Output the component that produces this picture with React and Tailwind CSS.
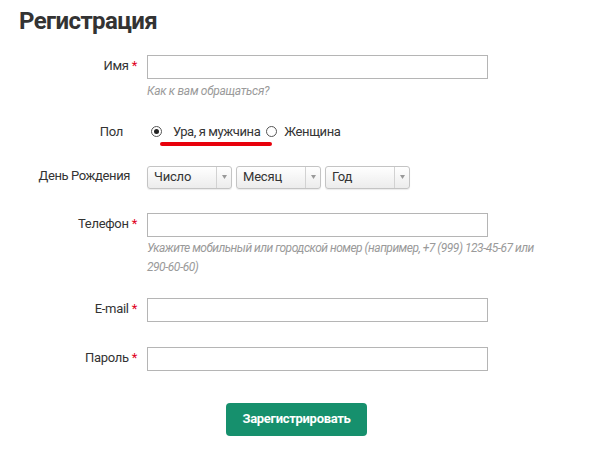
export default function App() {
  const font = { fontFamily: '"Roboto", "Noto Sans", sans-serif' };
  const Label = ({ children, req }) => (
    <div className="w-[137px] shrink-0 text-right text-[13px] text-[#333] tracking-[-0.3px]">
      {children}
      {req && <span className="text-[#e0001b] ml-[3px]">*</span>}
    </div>
  );
  const Input = () => (
    <div className="w-[341px] h-[24px] border border-[#b5b5b5] bg-white" />
  );
  const Select = ({ text }) => (
    <div className="w-[85px] h-[23px] border border-[#c4c4c4] rounded-[3px] flex bg-gradient-to-b from-white to-[#ececec] shadow-[0_1px_1px_rgba(0,0,0,0.08)]">
      <div className="flex-1 flex items-center pl-[6px] text-[13px] text-[#333] tracking-[-0.2px]">{text}</div>
      <div className="w-[15px] border-l border-[#d2d2d2] flex items-center justify-center">
        <svg width="5" height="4" viewBox="0 0 5 4"><path d="M0 0h5L2.5 4z" fill="#999" /></svg>
      </div>
    </div>
  );
  const Radio = ({ checked }) => (
    <span className="w-[11px] h-[11px] rounded-full border border-[#555] bg-white flex items-center justify-center shrink-0">
      {checked && <span className="w-[5px] h-[5px] rounded-full bg-[#222]" />}
    </span>
  );
  return (
    <div className="w-[600px] h-[449px] bg-white text-[#333] overflow-hidden" style={font}>
      <h1 className="pl-[19px] pt-[4px] text-[24px] font-bold text-[#333] leading-[34px] tracking-[-0.6px]">Регистрация</h1>
      <div className="mt-[17px] flex flex-col">
        <div className="flex gap-[10px]">
          <div className="pt-[1px] w-[137px] flex justify-end"><Label req>Имя</Label></div>
          <div className="flex flex-col">
            <Input />
            <div className="mt-[3px] text-[12px] italic text-[#9a9a9a] leading-[19px] tracking-[-0.3px]">Как к вам обращаться?</div>
          </div>
        </div>
        <div className="mt-[21px] flex gap-[10px] items-center">
          <div className="w-[137px] text-right text-[13px] pr-[14px] tracking-[-0.3px]">Пол</div>
          <div className="relative flex items-center text-[13px] tracking-[-0.4px]">
            <span className="ml-[4px]"><Radio checked /></span>
            <span className="ml-[11px]">Ура, я мужчина</span>
            <span className="ml-[6px]"><Radio /></span>
            <span className="ml-[7px]">Женщина</span>
            <span className="absolute left-[13px] top-[20px] w-[112px] h-[4px] rounded-full bg-[#e8000b]" />
          </div>
        </div>
        <div className="mt-[24px] flex gap-[10px] items-start">
          <div className="w-[137px] text-right text-[13px] pr-[7px] tracking-[-0.4px]">День Рождения</div>
          <div className="flex gap-[4px]">
            <Select text="Число" />
            <Select text="Месяц" />
            <Select text="Год" />
          </div>
        </div>
        <div className="mt-[24px] flex gap-[10px]">
          <div className="pt-[1px] w-[137px] flex justify-end"><Label req>Телефон</Label></div>
          <div className="flex flex-col">
            <Input />
            <div className="mt-[2px] text-[12px] italic text-[#9a9a9a] leading-[19px] tracking-[-0.5px] whitespace-nowrap">
              Укажите мобильный или городской номер (например, +7 (999) 123-45-67 или<br />290-60-60)
            </div>
          </div>
        </div>
        <div className="mt-[21px] flex gap-[10px]">
          <div className="pt-[1px] w-[137px] flex justify-end"><Label req>E-mail</Label></div>
          <Input />
        </div>
        <div className="mt-[25px] flex gap-[10px]">
          <div className="pt-[1px] w-[137px] flex justify-end"><Label req>Пароль</Label></div>
          <Input />
        </div>
        <div className="mt-[32px] pl-[226px]">
          <button className="w-[141px] h-[33px] rounded-[4px] bg-[#16906d] text-white text-[13px] font-bold tracking-[-0.3px]">Зарегистрировать</button>
        </div>
      </div>
    </div>
  );
}
